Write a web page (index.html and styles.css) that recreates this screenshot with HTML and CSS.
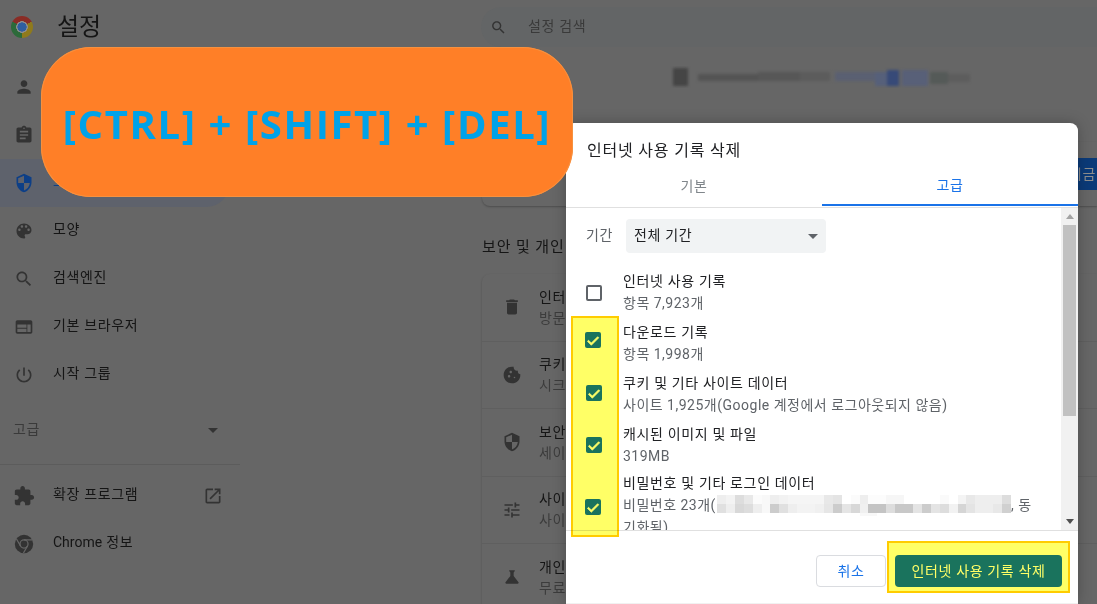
FILE: index.html
```html
<!DOCTYPE html>
<html lang="ko">
<head>
<meta charset="utf-8">
<title>설정</title>
<link rel="stylesheet" href="styles.css">
</head>
<body>
<div class="app">
  <header class="top">
    <div class="brand"><span class="logo"></span><h1 class="app-title">설정</h1></div>
    <div class="search">
      <svg class="ic" viewBox="0 0 24 24"><path d="M15.5 14h-.79l-.28-.27C15.41 12.59 16 11.11 16 9.5 16 5.91 13.09 3 9.5 3S3 5.91 3 9.5 5.91 16 9.5 16c1.61 0 3.09-.59 4.23-1.57l.27.28v.79l5 4.99L20.49 19l-4.99-5zm-6 0C7.01 14 5 11.99 5 9.5S7.01 5 9.5 5 14 7.01 14 9.5 11.99 14 9.5 14z"/></svg>
      <span class="search-text">설정 검색</span>
    </div>
  </header>
  <div class="cols">
    <nav class="side">
      <a class="nav"><svg class="ic" viewBox="0 0 24 24"><path d="M12 12c2.21 0 4-1.79 4-4s-1.79-4-4-4-4 1.79-4 4 1.79 4 4 4zm0 2c-2.67 0-8 1.34-8 4v2h16v-2c0-2.66-5.33-4-8-4z"/></svg><span>사용자</span></a>
      <a class="nav"><svg class="ic" viewBox="0 0 24 24"><path d="M19 3h-4.18C14.4 1.84 13.3 1 12 1c-1.3 0-2.4.84-2.82 2H5c-1.1 0-2 .9-2 2v14c0 1.1.9 2 2 2h14c1.1 0 2-.9 2-2V5c0-1.1-.9-2-2-2zm-7 0c.55 0 1 .45 1 1s-.45 1-1 1-1-.45-1-1 .45-1 1-1zm2 14H7v-2h7v2zm3-4H7v-2h10v2zm0-4H7V7h10v2z"/></svg><span>자동 완성</span></a>
      <a class="nav nav-active"><svg class="ic" viewBox="0 0 24 24"><path d="M12 1L3 5v6c0 5.55 3.84 10.74 9 12 5.16-1.26 9-6.45 9-12V5l-9-4zm0 10.99h7c-.53 4.12-3.28 7.79-7 8.94V12H5V6.3l7-3.11v8.8z"/></svg><span>보안 및 개인정보 보호</span></a>
      <a class="nav"><svg class="ic" viewBox="0 0 24 24"><path d="M12 3c-4.97 0-9 4.03-9 9s4.03 9 9 9c.83 0 1.5-.67 1.5-1.5 0-.39-.15-.74-.39-1.01-.23-.26-.38-.61-.38-.99 0-.83.67-1.5 1.5-1.5H16c2.76 0 5-2.24 5-5 0-4.42-4.03-8-9-8zm-5.5 9c-.83 0-1.5-.67-1.5-1.5S5.67 9 6.5 9 8 9.67 8 10.5 7.33 12 6.5 12zm3-4C8.67 8 8 7.33 8 6.5S8.67 5 9.5 5s1.5.67 1.5 1.5S10.33 8 9.5 8zm5 0c-.83 0-1.5-.67-1.5-1.5S13.67 5 14.5 5s1.5.67 1.5 1.5S15.33 8 14.5 8zm3 4c-.83 0-1.5-.67-1.5-1.5S16.67 9 17.5 9s1.5.67 1.5 1.5-.67 1.5-1.5 1.5z"/></svg><span>모양</span></a>
      <a class="nav"><svg class="ic" viewBox="0 0 24 24"><path d="M15.5 14h-.79l-.28-.27C15.41 12.59 16 11.11 16 9.5 16 5.91 13.09 3 9.5 3S3 5.91 3 9.5 5.91 16 9.5 16c1.61 0 3.09-.59 4.23-1.57l.27.28v.79l5 4.99L20.49 19l-4.99-5zm-6 0C7.01 14 5 11.99 5 9.5S7.01 5 9.5 5 14 7.01 14 9.5 11.99 14 9.5 14z"/></svg><span>검색엔진</span></a>
      <a class="nav"><svg class="ic" viewBox="0 0 24 24"><path d="M20 4H4c-1.1 0-1.99.9-1.99 2L2 18c0 1.1.9 2 2 2h16c1.1 0 2-.9 2-2V6c0-1.1-.9-2-2-2zm-5 14H4v-4h11v4zm0-5H4V9h11v4zm5 5h-4V9h4v9z"/></svg><span>기본 브라우저</span></a>
      <a class="nav"><svg class="ic" viewBox="0 0 24 24"><path d="M13 3h-2v10h2V3zm4.83 2.17l-1.42 1.42C17.99 7.86 19 9.81 19 12c0 3.87-3.13 7-7 7s-7-3.13-7-7c0-2.19 1.01-4.14 2.58-5.42L6.17 5.17C4.23 6.82 3 9.26 3 12c0 4.97 4.03 9 9 9s9-4.03 9-9c0-2.74-1.23-5.18-3.17-6.83z"/></svg><span>시작 그룹</span></a>
      <div class="adv"><span>고급</span><i class="caret"></i></div>
      <hr class="side-rule">
      <a class="nav"><svg class="ic ic-lg" viewBox="0 0 24 24"><path d="M20.5 11H19V7c0-1.1-.9-2-2-2h-4V3.5C13 2.12 11.88 1 10.5 1S8 2.12 8 3.5V5H4c-1.1 0-1.99.9-1.99 2v3.8H3.5c1.49 0 2.7 1.21 2.7 2.7s-1.21 2.7-2.7 2.7H2V20c0 1.1.9 2 2 2h3.8v-1.5c0-1.49 1.21-2.7 2.7-2.7 1.49 0 2.7 1.21 2.7 2.7V22H17c1.1 0 2-.9 2-2v-4h1.5c1.38 0 2.5-1.12 2.5-2.5S21.88 11 20.5 11z"/></svg><span>확장 프로그램</span><svg class="ic ic-end" viewBox="0 0 24 24"><path d="M19 19H5V5h7V3H5c-1.11 0-2 .9-2 2v14c0 1.1.89 2 2 2h14c1.1 0 2-.9 2-2v-7h-2v7zM14 3v2h3.59l-9.83 9.83 1.41 1.41L19 6.41V10h2V3h-7z"/></svg></a>
      <a class="nav"><svg class="ic ic-lg" viewBox="0 0 24 24"><circle cx="12" cy="12" r="10"/><circle class="cut" cx="12" cy="12" r="4.4"/><path class="cut" d="M12 7.6h9M8.2 14.2L3.8 6.6M15.8 14.2L11.4 21.8"/></svg><span><b class="lat">Chrome</b> 정보</span></a>
    </nav>
    <main class="main">
      <div class="blur-line">
        <svg width="302" height="22" viewBox="0 0 302 22">
          <g class="blur-g">
            <rect x="3" y="2" width="15" height="18" fill="#454545"/>
            <rect x="28" y="8" width="60" height="7" fill="#545454"/>
            <rect x="88" y="6" width="42" height="9" fill="#575757"/>
            <rect x="130" y="6" width="30" height="9" fill="#5c5c5c"/>
            <rect x="165" y="6" width="40" height="9" fill="#5a6072"/>
            <rect x="205" y="6" width="12" height="14" fill="#56607a"/>
            <rect x="217" y="4" width="12" height="16" fill="#374a78"/>
            <rect x="232" y="4" width="26" height="16" fill="#586078"/>
            <rect x="260" y="6" width="18" height="12" fill="#555a58"/>
            <rect x="278" y="8" width="22" height="8" fill="#5d5d5d"/>
          </g>
        </svg>
      </div>
      <section class="card safety"><button class="primary" type="button">지금</button></section>
      <h2 class="section">보안 및 개인</h2>
      <section class="card list">
        <div class="row"><svg class="ic" viewBox="0 0 24 24"><path d="M6 19c0 1.1.9 2 2 2h8c1.1 0 2-.9 2-2V7H6v12zM19 4h-3.5l-1-1h-5l-1 1H5v2h14V4z"/></svg><div class="row-text"><p class="row-t">인터넷 사용 기록 삭제</p><p class="row-s">방문 기록, 쿠키, 캐시 등을 삭제합니다.</p></div></div>
        <div class="row"><svg class="ic" viewBox="0 0 24 24"><path d="M21.95 10.99c-1.79-.03-3.7-1.95-2.68-4.22-2.97 1-5.78-1.59-5.19-4.56C7.11.74 2 6.41 2 12c0 5.52 4.48 10 10 10 5.89 0 10.54-5.08 9.95-11.01zM8.5 15c-.83 0-1.5-.67-1.5-1.5S7.67 12 8.5 12s1.5.67 1.5 1.5S9.33 15 8.5 15zm2-5C9.67 10 9 9.33 9 8.5S9.67 7 10.5 7s1.5.67 1.5 1.5-.67 1.5-1.5 1.5zm4.5 6c-.55 0-1-.45-1-1s.45-1 1-1 1 .45 1 1-.45 1-1 1z"/></svg><div class="row-text"><p class="row-t">쿠키 및 기타 사이트 데이터</p><p class="row-s">시크릿 모드에서 서드 파티 쿠키가 차단됩니다.</p></div></div>
        <div class="row"><svg class="ic" viewBox="0 0 24 24"><path d="M12 1L3 5v6c0 5.55 3.84 10.74 9 12 5.16-1.26 9-6.45 9-12V5l-9-4zm0 10.99h7c-.53 4.12-3.28 7.79-7 8.94V12H5V6.3l7-3.11v8.8z"/></svg><div class="row-text"><p class="row-t">보안</p><p class="row-s">세이프 브라우징 및 기타 보안 설정</p></div></div>
        <div class="row"><svg class="ic" viewBox="0 0 24 24"><path d="M3 17v2h6v-2H3zM3 5v2h10V5H3zm10 16v-2h8v-2h-8v-2h-2v6h2zM7 9v2H3v2h4v2h2V9H7zm14 4v-2H11v2h10zm-6-4h2V7h4V5h-4V3h-2v6z"/></svg><div class="row-text"><p class="row-t">사이트 설정</p><p class="row-s">사이트에서 사용하고 표시할 수 있는 정보를 제어합니다.</p></div></div>
        <div class="row"><svg class="ic" viewBox="0 0 24 24"><path d="M19.8 18.4L14 10.67V6.5l1.35-1.69c.26-.33.03-.81-.39-.81H9.04c-.42 0-.65.48-.39.81L10 6.5v4.17L4.2 18.4c-.49.66-.02 1.6.8 1.6h14c.82 0 1.29-.94.8-1.6z"/></svg><div class="row-text"><p class="row-t">개인정보 보호 샌드박스</p><p class="row-s">무료 체험 기능 사용</p></div></div>
      </section>
    </main>
  </div>
</div>

<section class="dialog">
  <h2 class="dlg-title">인터넷 사용 기록 삭제</h2>
  <div class="tabs"><div class="tab">기본</div><div class="tab tab-on">고급</div></div>
  <div class="scroller">
    <div class="content">
      <div class="range"><span class="range-l">기간</span><div class="select"><span>전체 기간</span><i class="caret caret-sel"></i></div></div>
      <div class="item"><span class="box"></span><div><p class="i-t">인터넷 사용 기록</p><p class="i-s">항목 7,923개</p></div></div>
      <div class="item"><span class="box on b2"><svg viewBox="0 0 24 24"><path d="M9.5 16.6L5.3 12.4l-1.6 1.6 5.8 5.8L20.6 8.7 19 7.1z"/></svg></span><div><p class="i-t">다운로드 기록</p><p class="i-s">항목 1,998개</p></div></div>
      <div class="item"><span class="box on b3"><svg viewBox="0 0 24 24"><path d="M9.5 16.6L5.3 12.4l-1.6 1.6 5.8 5.8L20.6 8.7 19 7.1z"/></svg></span><div><p class="i-t">쿠키 및 기타 사이트 데이터</p><p class="i-s">사이트 1,925개(Google 계정에서 로그아웃되지 않음)</p></div></div>
      <div class="item"><span class="box on b4"><svg viewBox="0 0 24 24"><path d="M9.5 16.6L5.3 12.4l-1.6 1.6 5.8 5.8L20.6 8.7 19 7.1z"/></svg></span><div><p class="i-t">캐시된 이미지 및 파일</p><p class="i-s">319MB</p></div></div>
      <div class="item"><span class="box on b5"><svg viewBox="0 0 24 24"><path d="M9.5 16.6L5.3 12.4l-1.6 1.6 5.8 5.8L20.6 8.7 19 7.1z"/></svg></span><div class="i-last"><p class="i-t">비밀번호 및 기타 로그인 데이터</p><p class="i-s">비밀번호 23개(<svg class="mosaic" width="294" height="21" viewBox="0 0 33 2.33" preserveAspectRatio="none" shape-rendering="crispEdges"><rect x="0" width="1" height="1" fill="#eee"/><rect x="1" width="1" height="1" fill="#f3f3f3"/><rect x="2" width="1" height="1" fill="#ddd"/><rect x="3" width="1" height="1" fill="#e8e8e8"/><rect x="4" width="1" height="1" fill="#fbfbfb"/><rect x="5" width="1" height="1" fill="#f8f8f8"/><rect x="6" width="1" height="1" fill="#eee"/><rect x="7" width="1" height="1" fill="#f2f2f2"/><rect x="8" width="4" height="1" fill="#f5f5f5"/><rect x="12" width="1" height="1" fill="#e8e8e8"/><rect x="13" width="1" height="1" fill="#e4e4e4"/><rect x="15" width="1" height="1" fill="#fbfbfb"/><rect x="16" width="1" height="1" fill="#eee"/><rect x="17" width="2" height="1" fill="#fcfcfc"/><rect x="19" width="2" height="1" fill="#f6f6f6"/><rect x="25" width="1" height="1" fill="#fafafa"/><rect x="27" width="1" height="1" fill="#f4f4f4"/><rect x="28" width="1" height="1" fill="#e8e8e8"/><rect x="29" width="3" height="1" fill="#eee"/><rect x="32" width="1" height="1" fill="#ddd"/><rect x="0" y="1" width="1" height="1" fill="#e0e0e0"/><rect x="1" y="1" width="1" height="1" fill="#eee"/><rect x="2" y="1" width="1" height="1" fill="#d8d8d8"/><rect x="3" y="1" width="1" height="1" fill="#ddd"/><rect x="4" y="1" width="1" height="1" fill="#eee"/><rect x="5" y="1" width="1" height="1" fill="#f8f8f8"/><rect x="6" y="1" width="1" height="1" fill="#ccc"/><rect x="7" y="1" width="1" height="1" fill="#e0e0e0"/><rect x="8" y="1" width="1" height="1" fill="#eee"/><rect x="9" y="1" width="2" height="1" fill="#f3f3f3"/><rect x="11" y="1" width="1" height="1" fill="#f0f0f0"/><rect x="12" y="1" width="1" height="1" fill="#e6e6e6"/><rect x="13" y="1" width="1" height="1" fill="#ccc"/><rect x="14" y="1" width="1" height="1" fill="#e5e5e5"/><rect x="15" y="1" width="1" height="1" fill="#d8d8d8"/><rect x="16" y="1" width="1" height="1" fill="#f0f0f0"/><rect x="17" y="1" width="2" height="1" fill="#c4c4c4"/><rect x="19" y="1" width="1" height="1" fill="#ddd"/><rect x="20" y="1" width="2" height="1" fill="#c8c8c8"/><rect x="22" y="1" width="1" height="1" fill="#e4e4e4"/><rect x="23" y="1" width="1" height="1" fill="#ccc"/><rect x="24" y="1" width="1" height="1" fill="#e4e4e4"/><rect x="25" y="1" width="1" height="1" fill="#ddd"/><rect x="26" y="1" width="1" height="1" fill="#f2f2f2"/><rect x="27" y="1" width="1" height="1" fill="#d5d5d5"/><rect x="28" y="1" width="1" height="1" fill="#e4e4e4"/><rect x="29" y="1" width="2" height="1" fill="#eee"/><rect x="31" y="1" width="1" height="1" fill="#e8e8e8"/><rect x="32" y="1" width="1" height="1" fill="#d0d0d0"/><rect x="16" y="2" width="2" height=".33" fill="#f8f8f8"/></svg>, 동<br>기화됨)</p></div></div>
    </div>
    <div class="scrollbar"><i class="arrow-up"></i><div class="thumb"></div><i class="arrow-down"></i></div>
  </div>
  <footer class="actions"><button class="btn btn-cancel" type="button">취소</button><button class="btn btn-del" type="button">인터넷 사용 기록 삭제</button></footer>
</section>

<div class="callout">[CTRL] + [SHIFT] + [DEL]</div>
<div class="mark mark-checks"></div>
<div class="mark mark-button"></div>
</body>
</html>
```
FILE: styles.css
```css
* { box-sizing: border-box; }
html, body { margin: 0; padding: 0; width: 1097px; height: 604px; overflow: hidden; }
body { background: #666; font-family: Roboto, "Noto Sans CJK KR", sans-serif; font-size: 14px; letter-spacing: .65px; color: #151515; position: relative; }
p, h1, h2 { margin: 0; font-weight: 400; }
.ic { width: 20px; height: 20px; fill: #333; flex: none; }
.ic .cut { fill: #333; stroke: #666; stroke-width: 1.4; }
.ic-lg { width: 22px; height: 22px; margin: 0 -1px; }
.lat { font-weight: 400; letter-spacing: 0; }

.app { height: 604px; display: flex; flex-direction: column; }
.top { height: 55px; flex: none; display: flex; padding-top: 7px; }
.brand { width: 481px; flex: none; display: flex; align-items: center; height: 40px; padding-left: 11px; }
.logo { width: 22px; height: 22px; border-radius: 50%; flex: none; background: radial-gradient(circle, #2f5ea0 0 4.4px, #8e8e8e 4.8px 5.6px, transparent 6px), conic-gradient(from 300deg, #8a2c25 0 120deg, #8f7a1c 120deg 240deg, #2c6a3a 240deg 360deg); }
.app-title { font-size: 24px; letter-spacing: 0; margin-left: 24px; color: #151515; line-height: 36px; }
.search { flex: 1; height: 40px; background: #636566; border-radius: 20px 0 0 20px; display: flex; align-items: center; padding-left: 9px; gap: 21px; color: #3a3a3a; }
.search .ic { width: 17px; height: 17px; }
.search-text { padding-bottom: 4px; }

.cols { flex: 1; display: flex; min-height: 0; }
.side { width: 240px; flex: none; padding-top: 8px; }
.nav { height: 48px; display: flex; align-items: center; padding-left: 14px; gap: 19px; width: 230px; border-radius: 0 24px 24px 0; color: #151515; }
.nav > span { padding-bottom: 6px; }
.nav-active { background: #5e626c; color: #0d3f87; }
.nav-active .ic { fill: #0d3f87; }
.ic-end { margin-left: auto; margin-right: 7px; }
.adv { height: 48px; margin-top: 7px; display: flex; align-items: center; padding: 0 12px 0 13px; justify-content: space-between; color: #3a3a3a; width: 230px; }
.adv > span { padding-bottom: 4px; }
.caret { width: 0; height: 0; border: 5px solid transparent; border-top-color: #333; border-bottom: 0; }
.side-rule { margin: 10px 0 7px; border: 0; border-top: 1px solid #5c5c5c; }

.main { flex: 1; padding-left: 242px; min-width: 0; }
.blur-line { padding: 11px 0 0 188px; height: 87px; }
.blur-line svg { display: block; }
.blur-g { filter: blur(1.6px); }
.card { border-radius: 8px 0 0 8px; box-shadow: 0 1px 2px rgba(0,0,0,.25); }
.safety { height: 64px; display: flex; justify-content: flex-end; align-items: center; }
.primary { width: 120px; height: 32px; border: 0; background: #0b3a78; color: #8d8d8d; font: inherit; letter-spacing: .65px; text-align: right; padding: 0 1px 3px 0; border-radius: 0; }
.section { font-size: 15px; letter-spacing: .9px; margin: 30px 0 16px; line-height: 22px; color: #151515; }
.row { height: 67.5px; display: flex; align-items: center; padding-left: 20px; gap: 17px; border-bottom: 1px solid #5f5f5f; white-space: nowrap; }
.row-text { width: 27px; overflow: hidden; flex: none; }
.row-t { line-height: 21px; color: #151515; }
.row-s { line-height: 20px; color: #3c3c3c; }

.dialog { position: absolute; left: 566px; top: 123px; width: 512px; height: 480px; background: #fff; border-radius: 8px 8px 0 0; box-shadow: 0 1px 0 #f1f1f1, 0 0 14px rgba(0,0,0,.25); display: flex; flex-direction: column; }
.dlg-title { font-size: 16px; letter-spacing: .8px; height: 42px; padding: 17px 0 0 21px; line-height: 22px; color: #202124; flex: none; }
.tabs { height: 43px; display: flex; border-bottom: 1px solid #e0e0e0; flex: none; }
.tab { width: 256px; height: 42px; display: flex; align-items: center; justify-content: center; color: #80868b; padding-bottom: 3px; }
.tab-on { color: #1a73e8; border-bottom: 2px solid #1a73e8; padding-bottom: 1px; height: 41px; }
.scroller { height: 323px; flex: none; display: flex; border-bottom: 1px solid #e0e0e0; overflow: hidden; }
.content { flex: 1; overflow: hidden; padding: 11px 0 0 20px; white-space: nowrap; }
.range { display: flex; align-items: center; height: 34px; margin-bottom: 13px; color: #5f6368; }
.range-l { width: 40px; flex: none; padding-bottom: 4px; }
.select { width: 200px; height: 34px; background: #f1f3f4; border-radius: 4px; display: flex; align-items: center; justify-content: space-between; padding: 0 8px; color: #202124; }
.select span { padding-bottom: 4px; }
.caret-sel { border-top-color: #5f6368; }
.item { display: flex; align-items: center; height: 51px; }
.item:last-child { height: 66px; }
.box { width: 16px; height: 16px; border: 2px solid #5f6368; border-radius: 2px; flex: none; margin: 2px 21px 0 0; }
.box.on { background: #1a73e8; border: 0; display: flex; }
.box.on svg { fill: #fff; stroke: #fff; stroke-width: 1.2; width: 16px; height: 16px; }
.b2 { margin: -6px 22px 0 -1px; }
.b3 { margin-top: -2px; }
.b4 { margin-top: 0; }
.b5 { margin: 8px 22px 0 -1px; }
.i-last { margin-top: 4px; }
.i-t { line-height: 22px; color: #202124; }
.i-s { line-height: 22px; color: #5f6368; letter-spacing: .5px; }
.mosaic { vertical-align: middle; margin: -6px 0 -4px 1px; }
.scrollbar { width: 17px; flex: none; background: #f1f1f1; display: flex; flex-direction: column; align-items: flex-end; position: relative; }
.thumb { width: 13px; margin: 17px 2px 0 0; height: 191px; background: #c1c1c1; }
.arrow-up, .arrow-down { position: absolute; left: 5px; width: 0; height: 0; border: 4px solid transparent; }
.arrow-up { top: 6px; border-top: 0; border-bottom: 5px solid #a3a3a3; }
.arrow-down { bottom: 6px; border-bottom: 0; border-top: 5px solid #505050; }
.actions { flex: 1; display: flex; justify-content: flex-end; align-items: flex-start; gap: 9px; padding: 24px 16px 0 0; }
.btn { height: 32px; border-radius: 4px; font: inherit; letter-spacing: .65px; padding: 0 0 3px; }
.btn-cancel { width: 70px; background: #fff; border: 1px solid #dadce0; color: #1a73e8; }
.btn-del { width: 167px; background: #1a73e8; border: 0; color: #fff; }

.callout { position: absolute; left: 41px; top: 47px; width: 532px; height: 150px; border-radius: 50px; background: #ff7f27; box-shadow: inset 0 0 0 1px #f7913f; color: #00a2e8; font-family: "Open Sans", sans-serif; font-weight: 700; font-size: 40px; letter-spacing: 1.6px; line-height: 1; padding-top: 4px; display: flex; align-items: center; justify-content: center; white-space: nowrap; }
.mark { position: absolute; background: #ffff66; border: 2px solid #ffcc00; mix-blend-mode: multiply; }
.mark-checks { left: 571px; top: 316px; width: 48px; height: 221px; }
.mark-button { left: 887px; top: 541px; width: 183px; height: 52px; }
```
